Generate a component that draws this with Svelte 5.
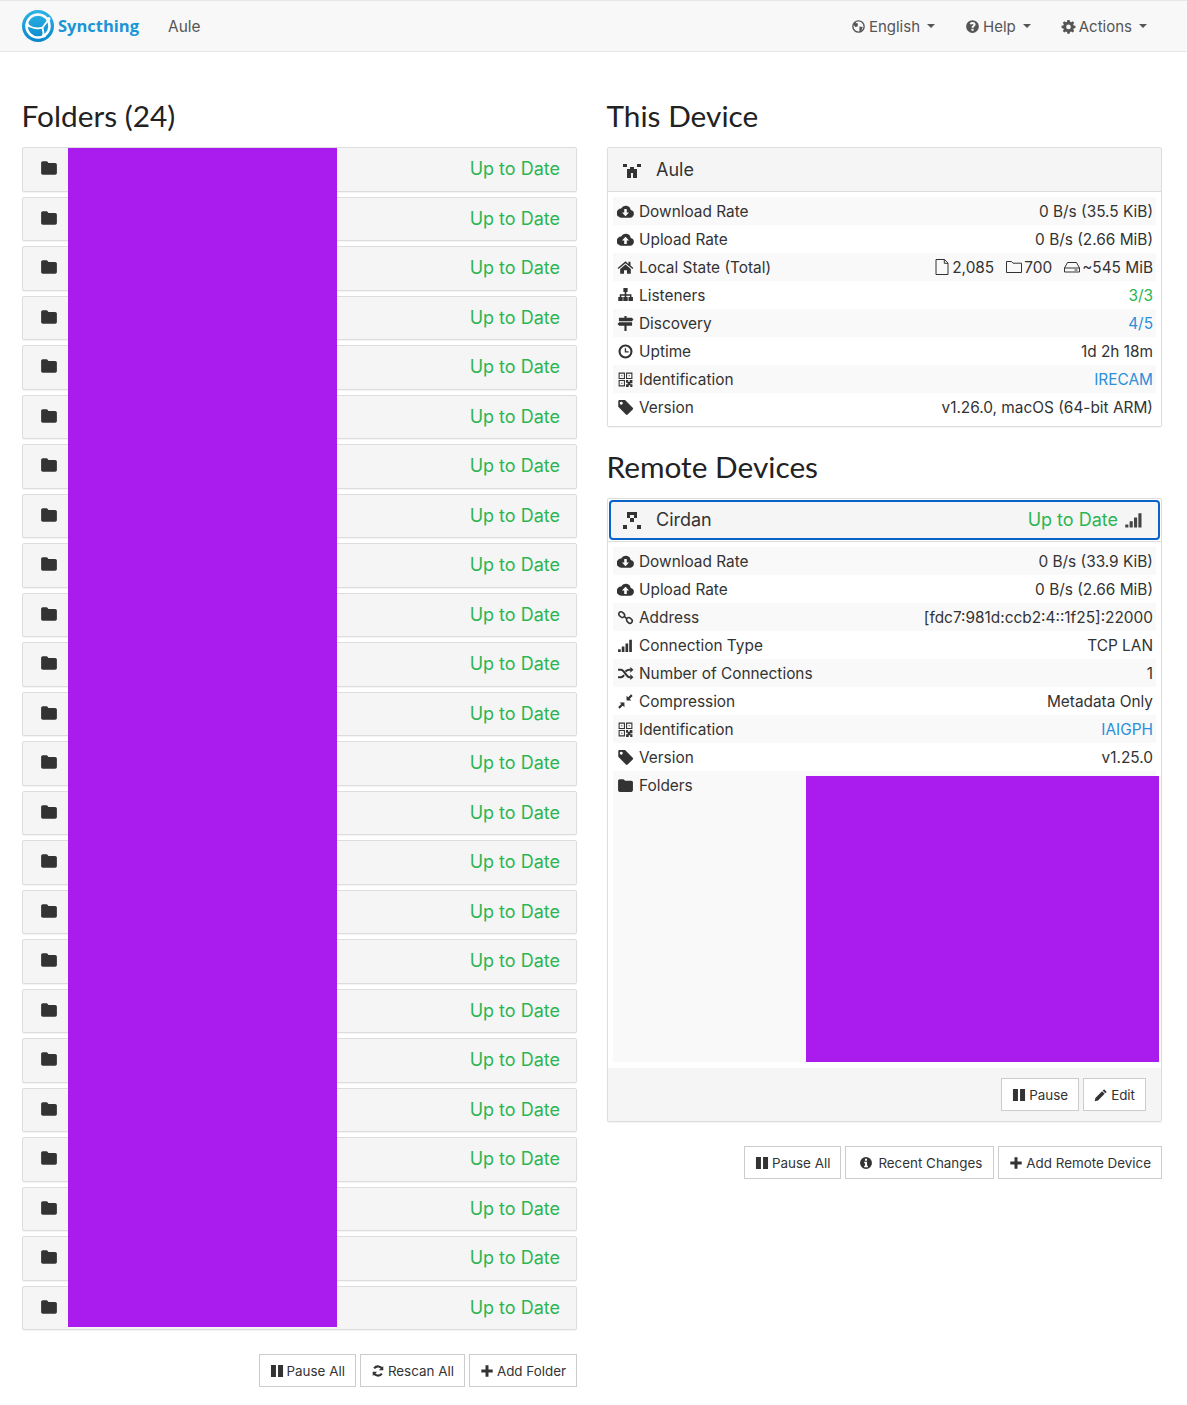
<script>
	const folders = Array.from({ length: 24 }, (_, i) => i);

	const thisDevice = [
		{ icon: 'down', label: 'Download Rate', value: '0 B/s (35.5 KiB)' },
		{ icon: 'up', label: 'Upload Rate', value: '0 B/s (2.66 MiB)' },
		{ icon: 'home', label: 'Local State (Total)', state: true },
		{ icon: 'sitemap', label: 'Listeners', value: '3/3', tone: 'green' },
		{ icon: 'signs', label: 'Discovery', value: '4/5', tone: 'blue' },
		{ icon: 'clock', label: 'Uptime', value: '1d 2h 18m' },
		{ icon: 'qr', label: 'Identification', value: 'IRECAM', tone: 'blue' },
		{ icon: 'tag', label: 'Version', value: 'v1.26.0, macOS (64-bit ARM)' }
	];

	const remote = [
		{ icon: 'down', label: 'Download Rate', value: '0 B/s (33.9 KiB)' },
		{ icon: 'up', label: 'Upload Rate', value: '0 B/s (2.66 MiB)' },
		{ icon: 'link', label: 'Address', value: '[fdc7:981d:ccb2:4::1f25]:22000' },
		{ icon: 'signal', label: 'Connection Type', value: 'TCP LAN' },
		{ icon: 'random', label: 'Number of Connections', value: '1' },
		{ icon: 'compress', label: 'Compression', value: 'Metadata Only' },
		{ icon: 'qr', label: 'Identification', value: 'IAIGPH', tone: 'blue' },
		{ icon: 'tag', label: 'Version', value: 'v1.25.0' }
	];

	const paths = {
		folder: 'M1 3.500C1 2.700 1.700 2 2.500 2h3.200c.6 0 1 .3 1.300.8l.5.7h6c.8 0 1.500.7 1.500 1.500v7.500c0 .8-.7 1.500-1.500 1.500h-11C1.700 14 1 13.300 1 12.500z',
		down: 'M12.900 6.500A4.800 4.800 0 0 0 3.900 5.200 4.200 4.200 0 0 0 4 13.800h8.700a3.700 3.700 0 0 0 .2-7.300zM8 12.500 4.700 9h2.100V5.600h2.400V9h2.100z',
		up: 'M12.900 6.500A4.800 4.800 0 0 0 3.900 5.200 4.200 4.200 0 0 0 4 13.800h8.700a3.700 3.700 0 0 0 .2-7.300zM9.200 9v3.200H6.800V9H4.700L8 5.500 11.300 9z',
		home: 'M8 2.200.6 8.400l.8 1L8 4l6.600 5.400.8-1-2.700-2.200V2.600h-1.900v2L8 2.200zM8 5.200 3 9.400v4.400h3.600v-3.200h2.800v3.200H13V9.400z',
		sitemap: 'M6 1h4v3.600H8.800v2.200h4.800v2.600h1.400v3.800h-4.200V9.400h1.400V8.200H8.800v1.200h1.300v3.800H5.900V9.400h1.300V8.200H4v1.200h1.400v3.800H1.200V9.400h1.400V6.800h4.600V4.600H6z',
		signs: 'M7 1h2v1.700h5l1.500 1.600L14 5.900H1.800V2.700H7zM2 6.900h12.200v3.200H9V15H7v-4.900H2L.5 8.500z',
		clock: 'M8 1.400a6.600 6.600 0 1 0 0 13.200A6.600 6.600 0 0 0 8 1.400zm0 2a4.600 4.600 0 1 1 0 9.200 4.600 4.600 0 0 1 0-9.200zM7.300 5v4H11V7.800H8.600V5z',
		tag: 'M1.200 2.200v5.200l7.200 7.200c.5.5 1.200.5 1.600 0l4.800-4.800c.5-.5.5-1.200 0-1.600L7.600 1H2.400C1.700 1 1.200 1.500 1.200 2.200zM4 5.500a1.400 1.400 0 1 1 0-2.800 1.400 1.400 0 0 1 0 2.800z',
		signal: 'M1 11.500h2.500V14H1zM4.500 9H7v5H4.500zM8 6h2.500v8H8zM11.500 2.500H14V14h-2.500z',
		pause: 'M1.100 1.100h5.700v13.800H1.100zM9.200 1.100h5.700v13.800H9.200z',
		plus: 'M6.300 1.500h3.400v4.800h4.800v3.400H9.700v4.800H6.300V9.700H1.500V6.300h4.800z',
		pencil: 'M11.500 1.500l3 3-1.500 1.500-3-3zM9.200 3.700l3 3-7.600 7.600-3.800.8.800-3.800z',
		info: 'M8 1.200a6.800 6.800 0 1 0 0 13.600A6.800 6.800 0 0 0 8 1.200zM6.800 3.200h2.400v2.200H6.800zM5.900 6.500h3.300v4.600h1v1.700H5.900v-1.700h1V8.200h-1z',
		help: 'M8 1.200a6.800 6.800 0 1 0 0 13.600A6.800 6.800 0 0 0 8 1.200zm1.200 11.300H6.900v-2.200h2.300zm.2-3.800v.7H6.900V9c0-1.900 2.100-2 2.100-3 0-.5-.4-.8-1-.8-.6 0-1.100.3-1.500.9L5 4.900c.7-1 1.700-1.600 3.200-1.600 1.600 0 3.100.9 3.100 2.600 0 1.700-1.900 2.100-1.900 2.800z',
		gear: 'M6.800 1h2.400l.4 1.900 1.200.5 1.600-1.100 1.700 1.700-1.100 1.600.5 1.200 1.900.4v2.400l-1.900.4-.5 1.200 1.100 1.600-1.700 1.700-1.600-1.100-1.200.5-.4 1.900H6.800l-.4-1.900-1.200-.5-1.600 1.100-1.700-1.700 1.100-1.600-.5-1.200L.6 9.600V7.200l1.900-.4.5-1.200L1.900 4l1.700-1.700 1.600 1.100 1.200-.5zM8 5.900a2.500 2.500 0 1 0 0 5 2.500 2.500 0 0 0 0-5z'
	};

	const strokes = {
		link: 'M6.900 6.900 9.100 9.100M2.200 3.400a2.100 2.100 0 0 1 3-.3l1.300 1.200a2.100 2.100 0 1 1-3 3L2.300 6.200a2.100 2.100 0 0 1-.1-2.800zM9.600 8.700a2.100 2.100 0 0 1 3 0l1.100 1.100a2.100 2.100 0 1 1-3 3l-1.100-1.100a2.100 2.100 0 0 1 0-3z',
		random: 'M1 4.500h2.800c2.900 0 4.900 7 8 7h1M1 11.500h2.800c1.100 0 2-.9 2.800-2M8 6.200c1-1 2.300-1.700 3.800-1.700h1',
		compress: 'M14 2 9.800 6.200M1.800 14 6 9.800',
		refresh: 'M13 6.500A5.300 5.300 0 0 0 3.600 5M3 9.500A5.300 5.300 0 0 0 12.400 11'
	};

	const strokeWidth = { link: 1.500, refresh: 2.400 };
</script>

{#snippet icon(name, cls = 'ico')}
	<svg class={cls} viewBox="0 0 16 16" aria-hidden="true">
		{#if name === 'qr'}
			<path fill-rule="evenodd" d="M1.500 1.500h6v6h-6zm1 1v4h4v-4zM8.500 1.500h6v6h-6zm1 1v4h4v-4zM1.500 8.500h6v6h-6zm1 1v4h4v-4zM4 4h1v1H4zM11 4h1v1h-1zM4 11h1v1H4zM8.500 8.500h2v1.500h1.500v-1.500h2.500v3h-2v1h2v2.500h-2v-1.500h-1.500v1.500h-2.500v-2.500h1.500v-1.500h-1.500z" />
		{:else if strokes[name]}
			<path d={strokes[name]} fill="none" stroke="currentColor" stroke-width={strokeWidth[name] ?? 2} />
			{#if name === 'random'}
				<path d="M12.500 1.800 15.500 4.500 12.500 7.200zM12.500 8.800 15.500 11.500 12.500 14.200z" />
			{/if}
			{#if name === 'compress'}
				<path d="M9 2.500v4.500h4.500zM7 13.500V9H2.500z" />
			{/if}
			{#if name === 'refresh'}
				<path d="M14 2.200v5H9zM2 13.800v-5h5z" />
			{/if}
		{:else}
			<path fill-rule="evenodd" d={paths[name]} />
		{/if}
	</svg>
{/snippet}

{#snippet rows(list)}
	{#each list as row}
		<div class="row">
			<span class="label">{@render icon(row.icon)}{row.label}</span>
			{#if row.state}
				<span class="state">
					<span class="stat">
						<svg class="thin" viewBox="0 0 16 16"><path d="M2 .5h8.500L14 4v11.500H2zM10.300 .5V4.300H14" /></svg>2,085
					</span>
					<span class="stat">
						<svg class="thin" viewBox="0 0 16 16"><path d="M.5 2.500h5l1.500 1.700h8.500v9.300H.5z" /></svg>700
					</span>
					<span class="stat">
						<svg class="thin" viewBox="0 0 16 16"><path d="M.5 9 3.500 3.500h9L15.500 9v4h-15zM.5 9h15M10.500 11h3" /></svg>~545 MiB
					</span>
				</span>
			{:else}
				<span class="value {row.tone ?? ''}">{row.value}</span>
			{/if}
		</div>
	{/each}
{/snippet}

<nav class="navbar">
	<div class="brand">
		<svg class="logo" viewBox="0 0 32 32" aria-hidden="true">
			<defs>
				<linearGradient id="logo-fill" x1="0" y1="0" x2="0" y2="1">
					<stop offset="0" stop-color="#2bb4e6" />
					<stop offset="1" stop-color="#0a87cc" />
				</linearGradient>
			</defs>
			<circle cx="16" cy="16" r="16" fill="url(#logo-fill)" />
			<circle cx="16" cy="16" r="11.500" fill="none" stroke="#fff" stroke-width="2.500" />
			<path d="M5 15C11 18.500 16.500 19 20.500 17.500L27 9M20.500 17.500 22 26" fill="none" stroke="#fff" stroke-width="1.800" />
			<circle cx="5.300" cy="15" r="2" fill="#fff" />
			<circle cx="26.500" cy="9" r="2" fill="#fff" />
			<circle cx="22" cy="25.500" r="2" fill="#fff" />
		</svg>
		<span class="wordmark">Syncthing</span>
	</div>
	<span class="device-name">Aule</span>
	<div class="menu">
		<span class="menu-item"><svg class="ico" viewBox="0 0 16 16"><circle cx="8" cy="8" r="6" fill="none" stroke="currentColor" stroke-width="1.500" /><path d="M4 3.500 7.500 5 7 8 4.500 8.500 3 6zM9 8l3.500.5L11 12.500 9 13z" /></svg>English<i class="caret"></i></span>
		<span class="menu-item">{@render icon('help')}Help<i class="caret"></i></span>
		<span class="menu-item">{@render icon('gear')}Actions<i class="caret"></i></span>
	</div>
</nav>

<main class="page">
	<section class="column">
		<h1>Folders (24)</h1>
		<div class="folder-list">
			{#each folders as f (f)}
				<div class="folder-row">
					{@render icon('folder', 'folder-icon')}
					<span class="status">Up to Date</span>
				</div>
			{/each}
			<div class="redact redact-folders"></div>
		</div>
		<div class="actions">
			<button>{@render icon('pause')}Pause All</button>
			<button>{@render icon('refresh')}Rescan All</button>
			<button>{@render icon('plus')}Add Folder</button>
		</div>
	</section>

	<section class="column">
		<h1>This Device</h1>
		<div class="panel">
			<div class="panel-head">
				<svg class="identicon" viewBox="0 0 18 18" shape-rendering="crispEdges">
					<path d="M0 3h4v3H0zM14 3h4v3h-4zM7 6h4v2H7zM4 8h10v9h-4v-5H8v5H4z" />
				</svg>
				<span class="panel-title">Aule</span>
			</div>
			<div class="table">{@render rows(thisDevice)}</div>
		</div>

		<h1 class="second">Remote Devices</h1>
		<div class="panel">
			<div class="focus-wrap">
				<div class="panel-head focused">
					<svg class="identicon" viewBox="0 0 18 18" shape-rendering="crispEdges">
						<path d="M4 1h10v6h-3V4H7v3H4zM7 7h4v4H7zM0 14h4v4H0zM14 14h4v4h-4z" />
					</svg>
					<span class="panel-title">Cirdan</span>
					<span class="status">Up to Date</span>
					{@render icon('signal', 'signal')}
				</div>
			</div>
			<div class="table tall">
				{@render rows(remote)}
				<div class="row folders-row">
					<span class="label">{@render icon('folder')}Folders</span>
					<div class="redact redact-remote"></div>
				</div>
			</div>
			<div class="panel-foot">
				<button>{@render icon('pause')}Pause</button>
				<button>{@render icon('pencil')}Edit</button>
			</div>
		</div>
		<div class="actions">
			<button>{@render icon('pause')}Pause All</button>
			<button class="wide-gap">{@render icon('info')}Recent Changes</button>
			<button>{@render icon('plus')}Add Remote Device</button>
		</div>
	</section>
</main>

<style>
	:global(body) {
		font-family: "Inter", "Liberation Sans", Arial, sans-serif;
		font-size: 15.400px;
		color: #333;
		background: #fff;
	}

	svg {
		fill: currentColor;
		flex: none;
	}

	.navbar {
		display: flex;
		align-items: center;
		height: 50px;
		background: #f8f8f8;
		border-top: 1px solid #e7e7e7;
		border-bottom: 1px solid #e7e7e7;
		padding: 0 40px 0 22px;
		color: #555;
	}

	.brand {
		display: flex;
		align-items: center;
		gap: 4px;
		margin-right: 29px;
	}

	.logo {
		width: 32px;
		height: 32px;
	}

	.wordmark {
		font-family: "Open Sans", sans-serif;
		font-size: 16.500px;
		font-weight: 700;
		color: #1a95d6;
		margin-bottom: 2px;
	}

	.menu {
		display: flex;
		gap: 30px;
		margin-left: auto;
		font-size: 15px;
	}

	.menu-item {
		display: flex;
		align-items: center;
	}

	.menu-item .ico {
		width: 15px;
		height: 15px;
		margin-right: 3px;
	}

	.caret {
		width: 0;
		height: 0;
		margin-left: 7px;
		border-top: 4px solid #555;
		border-left: 4px solid transparent;
		border-right: 4px solid transparent;
	}

	.page {
		display: grid;
		grid-template-columns: 555px 555px;
		gap: 30px;
		padding: 0 25px 18px 22px;
	}

	h1 {
		font-family: "Lato", sans-serif;
		font-size: 29.800px;
		font-weight: 400;
		line-height: 32px;
		color: #222;
		margin: 48px 0 15px -0.500px;
	}

	h1.second {
		margin-top: 24px;
	}

	.folder-list {
		position: relative;
	}

	.folder-row {
		display: flex;
		align-items: center;
		justify-content: space-between;
		height: 44.500px;
		box-sizing: border-box;
		margin-bottom: 5px;
		padding: 0 16px 0 17px;
		background: #f5f5f5;
		border: 1px solid #ddd;
		border-radius: 2px;
		box-shadow: 0 1px 1px rgba(0, 0, 0, 0.05);
	}

	.folder-icon {
		width: 18px;
		height: 18px;
		margin-bottom: 2px;
		color: #333;
	}

	.status {
		font-size: 18px;
		color: #2cb552;
		margin-bottom: 1px;
	}

	.redact {
		position: absolute;
		background: #a91ced;
	}

	.redact-folders {
		left: 46px;
		top: 1px;
		width: 269px;
		height: 1179px;
	}

	.actions {
		display: flex;
		justify-content: flex-end;
		gap: 4px;
		margin-top: 24px;
	}

	button {
		display: flex;
		align-items: center;
		height: 33px;
		padding: 0 10px;
		font-family: "Inter", sans-serif;
		font-size: 13.400px;
		color: #333;
		background: #fff;
		border: 1px solid #ccc;
		border-radius: 0;
	}

	button .ico {
		width: 14px;
		height: 14px;
		margin-right: 3px;
	}

	button.wide-gap {
		padding: 0 11px 0 13px;
	}

	.wide-gap .ico {
		margin-right: 5px;
	}

	.panel {
		background: #fff;
		border: 1px solid #ddd;
		border-radius: 2px;
		box-shadow: 0 1px 1px rgba(0, 0, 0, 0.05);
	}

	.panel-head {
		display: flex;
		align-items: center;
		height: 44px;
		box-sizing: border-box;
		padding: 0 15px;
		background: #f5f5f5;
		border-bottom: 1px solid #ddd;
	}

	.focus-wrap {
		padding: 1px;
		border-bottom: 1px solid #ddd;
	}

	.panel-head.focused {
		height: 40px;
		padding: 0 14px 1px 12px;
		border: 2px solid #0b62cb;
		border-radius: 4px;
	}

	.identicon {
		width: 18px;
		height: 18px;
		color: #333;
		margin-right: 15px;
	}

	.panel-title {
		font-size: 18px;
		color: #333;
		flex: 1;
	}

	.signal {
		width: 20px;
		height: 20px;
		margin-left: 6px;
		color: #444;
	}

	.table {
		padding: 5px;
	}

	.table.tall {
		padding-bottom: 6px;
	}

	.row {
		display: flex;
		justify-content: space-between;
		align-items: center;
		height: 28px;
		padding: 0 3px 0 4px;
		color: #333;
	}

	.row:nth-child(odd) {
		background: #f9f9f9;
	}

	.label {
		display: flex;
		align-items: center;
	}

	.ico {
		width: 17px;
		height: 17px;
		margin-right: 5px;
	}

	.green {
		color: #2cb552;
	}

	.blue {
		color: #2c8fdc;
	}

	.state {
		display: flex;
		gap: 12px;
	}

	.stat {
		display: flex;
		align-items: center;
	}

	.thin {
		width: 16px;
		height: 16px;
		margin-right: 2px;
		fill: none;
		stroke: #333;
		stroke-width: 1;
	}

	.folders-row {
		position: relative;
		height: 291px;
		align-items: flex-start;
		padding-top: 5px;
		box-sizing: border-box;
	}

	.redact-remote {
		left: 193px;
		top: 5px;
		width: 353px;
		height: 286px;
	}

	.panel-foot {
		display: flex;
		justify-content: flex-end;
		gap: 4px;
		padding: 10px 15px;
		background: #f5f5f5;
	}
</style>
